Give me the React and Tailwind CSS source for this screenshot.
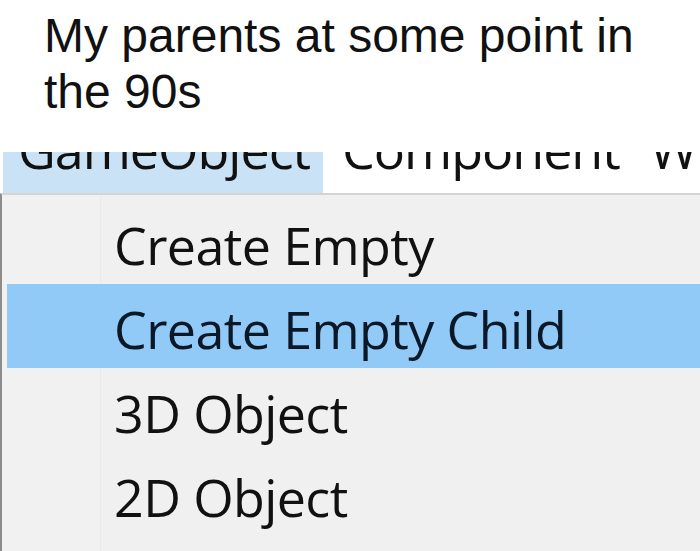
import React from 'react';

const items = [
  { label: 'Create Empty' },
  { label: 'Create Empty Child', active: true },
  { label: '3D Object' },
  { label: '2D Object' },
];

const App = () => {
  return (
    <div className="w-[700px] h-[551px] overflow-hidden bg-white flex flex-col">
      <div className="h-[152px] shrink-0 pl-[44px] pt-[8px] font-['Liberation_Sans',Arial,sans-serif] text-[48px] leading-[56px] text-[#111]">
        My parents at some point in
        <br />
        the 90s
      </div>

      <div className="h-[41px] shrink-0 flex overflow-hidden font-['Open_Sans',sans-serif] text-[52px] leading-none tracking-[-1px] text-[#111] whitespace-nowrap">
        <div className="ml-[3px] w-[320px] shrink-0 bg-[#c9e2f6] pl-[15px]">
          <span className="block mt-[-29px]">GameObject</span>
        </div>
        <div className="pl-[19px] pr-[30px] shrink-0">
          <span className="block mt-[-29px]">Component</span>
        </div>
        <div className="shrink-0">
          <span className="block mt-[-29px]">Window</span>
        </div>
      </div>

      <div className="flex-1 border-t-2 border-[#d4d4d4] border-l-2 border-l-[#8c8c8c] bg-[#f0f0f0] bg-[linear-gradient(to_right,#f1f1f1_98px,#e9e9e9_98px,#e9e9e9_99px,#f0f0f0_99px)] pt-[5px] font-['Open_Sans',sans-serif] text-[52px] tracking-[-0.6px] text-[#111]">
        {items.map((item) => (
          <div
            key={item.label}
            className={
              item.active
                ? 'h-[84px] ml-[5px] pl-[107px] pt-[5px] flex items-center bg-[#91c9f7] text-[#0b1828]'
                : 'h-[84px] ml-[5px] pl-[107px] pt-[5px] flex items-center'
            }
          >
            <span className="leading-none">{item.label}</span>
          </div>
        ))}
      </div>
    </div>
  );
};

export default App;
